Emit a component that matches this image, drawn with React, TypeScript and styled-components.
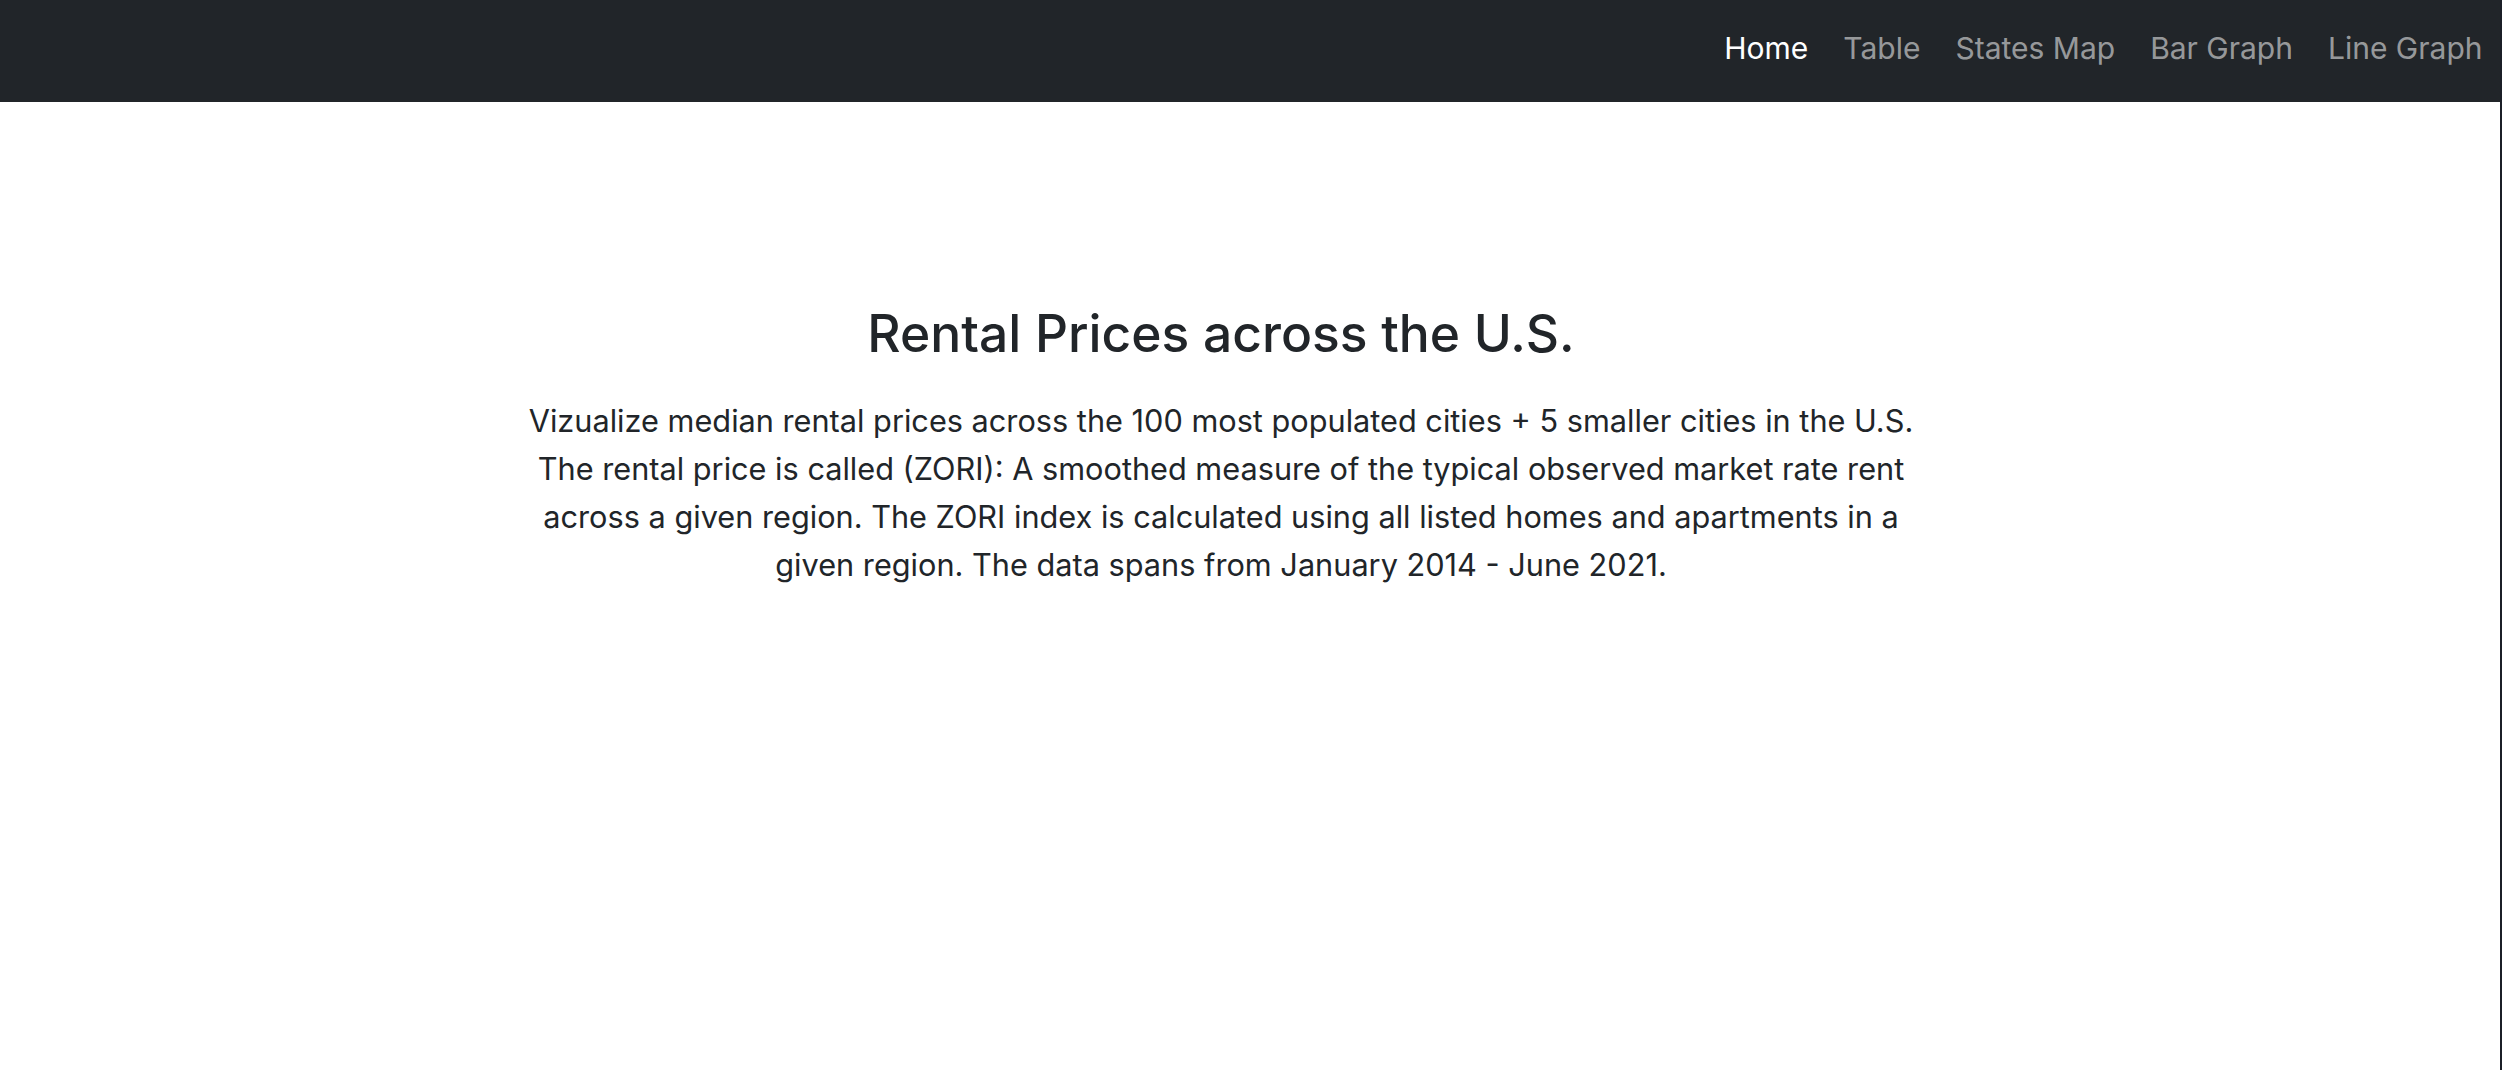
import styled, { createGlobalStyle } from "styled-components";

const GlobalStyle = createGlobalStyle`
  html, body {
    margin: 0;
    padding: 0;
    background: #fff;
  }
  body {
    font-family: Inter, "Noto Sans", "Liberation Sans", sans-serif;
    color: #212529;
  }
`;

const Page = styled.div`
  min-height: 1070px;
  border-right: 2px solid #1b1f27;
  box-sizing: border-box;
`;

const Navbar = styled.nav`
  height: 102px;
  background: #212529;
  display: flex;
  align-items: center;
  justify-content: flex-end;
`;

const NavList = styled.ul`
  display: flex;
  list-style: none;
  margin: 0;
  padding: 0;
`;

const NavLink = styled.a<{ $active?: boolean }>`
  display: block;
  padding: 0 17.5px;
  font-size: 30px;
  line-height: 40px;
  text-decoration: none;
  color: ${(p) => (p.$active ? "#fff" : "rgba(255, 255, 255, 0.55)")};
  margin-top: -6px;
`;

const Hero = styled.main`
  padding: 199px 0 0 516px;
  width: 1410px;
  text-align: center;
`;

const Title = styled.h2`
  margin: 0 0 32px;
  font-size: 51.5px;
  font-weight: 500;
  line-height: 64px;
`;

const Lead = styled.p`
  margin: 0;
  font-size: 30.7px;
  line-height: 48px;
`;

const links = ["Home", "Table", "States Map", "Bar Graph", "Line Graph"];

const App = function () {
  return (
    <Page>
      <GlobalStyle />
      <Navbar>
        <NavList>
          {links.map((label, i) => (
            <li key={label}>
              <NavLink href="#" $active={i === 0}>
                {label}
              </NavLink>
            </li>
          ))}
        </NavList>
      </Navbar>
      <Hero>
        <Title>Rental Prices across the U.S.</Title>
        <Lead>
          Vizualize median rental prices across the 100 most populated cities + 5 smaller cities in the U.S.
          The rental price is called (ZORI): A smoothed measure of the typical observed market rate rent
          across a given region. The ZORI index is calculated using all listed homes and apartments in a
          given region. The data spans from January 2014 - June 2021.
        </Lead>
      </Hero>
    </Page>
  );
};

export default App;
